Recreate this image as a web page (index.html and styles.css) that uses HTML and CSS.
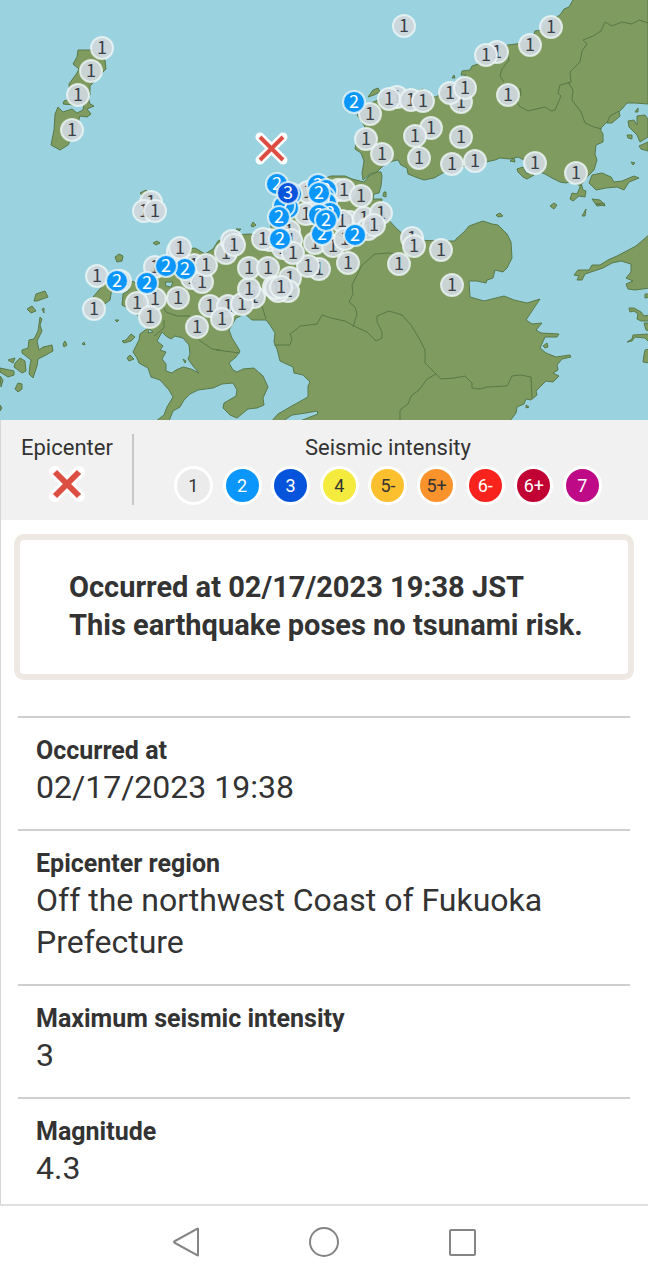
FILE: index.html
```html
<!DOCTYPE html>
<html lang="en">
<head>
<meta charset="utf-8">
<meta name="viewport" content="width=device-width, initial-scale=1">
<title>Earthquake information</title>
<link rel="stylesheet" href="styles.css">
</head>
<body>
<main class="page">
  <svg class="map" viewBox="0 0 648 420" role="img" aria-label="Seismic intensity map">
    <rect class="sea" width="648" height="420"/>
    <g class="land">
      <!-- Honshu -->
      <path d="M573 0L569 7L564 9L560 15L551 20L541 30L535 31L533 36L527 42L516 44L508 45L495 48L485 58L478 64L472 66L470 70L462 71L461 75L466 75L450 87L436 97L425 96L423 89L414 92L400 96L378 100L371 103L365 109L357 115L364 125L366 131L356 144L355 149L361 153L364 161L362 173L363 180L370 174L377 172L384 165L393 161L398 160L401 165L407 168L408 174L418 178L424 180L434 178L441 174L450 169L470 165L486 162L495 160L500 158L510 159L518 157L524 160L530 168L545 174L552 178L560 182L566 183L572 181L580 186L588 176L594 170L597 160L595 154L596 145L603 142L603 134L600 129L610 119L622 109L627 103L635 103L648 104V-3H573Z"/>
      <!-- Kyushu -->
      <path d="M381 172L382 176L381 186L379 193L374 194L373 199L382 199L381 206L385 216L397 229L403 234L415 240L440 241L455 241L456 239L464 232L469 226L483 221L492 224L498 225L507 234L511 242L512 258L507 268L503 272L495 270L493 278L487 280L486 283L477 281L469 281L470 297L484 301L504 296L514 300L527 303L540 299L532 311L526 320L532 324L542 323L536 330L541 333L559 334L557 337L545 337L540 348L546 353L556 357L570 355L571 357L562 359L557 365L558 370L553 373L559 376L553 382L546 381L536 391L537 395L531 400L526 399L524 404L517 407L516 413L510 421H300L318 414L317 411L306 413L292 415L280 423H270L278 414L290 407L308 397V386L310 382L303 375L294 373L293 367L280 361L277 349L274 342L275 333L270 325L266 320L252 320L245 314L236 318L229 330L232 338L240 351L236 357L229 363L233 370L237 372L243 369L254 368L263 376L268 387L263 398L264 405L257 408L248 409L237 418L230 415L223 408L224 403L236 396L237 390L233 383L222 384L213 388L198 390L190 394L184 400L180 407L173 411L169 421H156L164 415L167 407L173 397L169 390L160 380L151 377L148 368L139 363L137 358L133 352L139 340L140 334L148 328L141 318L130 309L122 305L123 294L129 290L128 280L140 284L150 270L160 262L180 250L195 248L205 254L213 249L218 241L232 235L250 234L264 236L272 232L270 222L274 206L280 190L300 188L318 181L331 176L345 176L352 179L364 182L369 176L377 172Z"/>
      <!-- Tsushima -->
      <path d="M78 50L92 50L105 60L106 69L100 75L90 86L90 95L83 101L70 95L69 84L77 73L79 69L73 64L77 57Z"/>
      <path d="M64 101L70 99L78 101L88 97L90 104L94 106L87 109L91 114L87 117L80 116L76 129L68 145L60 150L51 145L54 130L55 114L58 107L63 112L72 109L77 113L83 110L84 103L74 105L63 104Z"/>
      <!-- Islets -->
      <path d="M368 97L373 90L378 88L380 92L374 95ZM384 192L386 192V197L383 196ZM140 193L146 190L151 195L145 198ZM115 257L119 254L123 256L122 261L117 262ZM153 243L157 241L160 243L156 245ZM452 78L454 75L455 78Z"/>
      <path d="M105 283L112 288L110 300L102 306L95 302L93 297ZM34 301L36 294L45 291L48 297L37 301ZM27 309L32 306L36 311L31 313ZM42 309L44 308L44 313ZM40 317L42 319L40 325L42 331L37 341L39 350L43 347L52 345L53 351L46 355L38 359L37 366L33 378L29 374L30 365L31 360L22 353L22 350L28 348L29 340L34 339L38 331ZM15 363L20 358L25 361L26 371L22 373L14 367ZM0 368L14 371L14 375L8 377L0 372ZM15 389L18 383L22 384L22 389L18 392ZM8 360L15 358L13 363ZM0 376L3 380L1 387ZM0 405L2 408L0 411ZM63 344L65 341L67 345L64 347ZM82 344L84 342L85 345ZM115 320L119 320L117 322ZM122 341L126 340L131 334L135 337L131 341L124 343ZM127 358L130 355L134 359L129 361ZM251 226L253 222L256 225L253 227ZM236 229L241 229L239 231ZM496 215L500 213L503 216L498 217Z"/>
      <!-- Inland Sea -->
      <path d="M581 183L583 190L586 191L585 197L579 196L573 201L570 199L572 193L577 194L580 187ZM589 183L592 175L602 173L611 177L614 182L622 181L634 176L639 178L629 182L624 190L617 187L606 188L596 190ZM592 199L600 200L605 205L597 206ZM550 206L554 203L557 205L554 209ZM607 123L610 116L619 111L620 116L612 123ZM517 169L523 167L526 173L534 175L527 179L523 177L518 172ZM510 161L514 158L515 162ZM635 112L638 108L638 112ZM628 121L634 120L637 125L637 116L645 115L648 119V137L640 142L637 135L629 127ZM627 135L632 135L632 139L628 138ZM639 146L648 142V151L641 149ZM631 162L635 163L633 165ZM582 216L586 209L585 216ZM596 204L604 203L605 206Z"/>
      <!-- Shikoku -->
      <path d="M650 234L636 246L617 256L608 260L600 265L592 265L589 270L578 270L574 275L579 276L577 280L582 280L585 274L594 271L603 268L612 263L621 261L631 264L631 272L626 278L633 281L626 284L628 289L635 290L650 288ZM650 294L645 294L645 298L650 297ZM629 308L634 308L641 312L644 316L650 315V321L641 321L637 319L638 314L634 311L630 312ZM650 323L644 323L646 330L650 331ZM650 334L633 335L632 339L627 342L632 341L635 337L645 338L650 343ZM650 349L645 350L644 355L643 362L650 363ZM543 346L547 343L548 347L545 348ZM526 405L529 407L526 408Z"/>
    </g>
    <!-- Omura bay and inlets -->
    <path class="bay" d="M157 341L162 332L166 336L171 339L175 336L183 338L189 345L190 354L188 359L193 366L199 373L191 369L183 367L176 370L172 373L166 371L166 364L162 359L166 352L160 350L163 346ZM165 282L173 282L171 287L166 286ZM149 329L153 332L148 333Z"/>
    <path class="islet" d="M183 359L186 361L185 363Z"/>
    <g class="border">
      <path d="M648 23L639 20L632 24L622 22L612 26L605 22L601 31L593 36L583 40L587 44L582 51L580 62L570 72L571 82L560 85L558 93L561 96L555 110L551 111L545 107L528 111L519 106L516 97L521 95L520 88M506 48L509 60L502 69L500 76L504 82M568 82L573 90L572 100L581 112L585 123L594 127L602 129"/>
      <path d="M389 253L375 254L362 265L357 275L352 285L353 294L349 302L355 307L357 314L353 327M274 345H290L292 339L290 334L297 329L300 326L309 325L317 324L322 315L331 318L345 321L356 327L367 332L376 341L382 338L382 332L377 322L377 316L389 311L402 315L411 325L420 340L425 350L425 363L436 374L441 379L454 378L465 376L472 383L472 388L480 389L487 387L507 386L512 376L520 375L531 377L532 398M436 374L427 379L419 390L411 396L408 404L400 410V420M262 306L266 319M216 350L240 353M163 306L166 312L177 316L190 316M199 340L212 349L220 350M164 320L164 328L154 336M389 253L396 254"/>
    </g>
    <g id="stations"></g>
    <g class="epicenter"><path class="halo" d="M260 137L283 160M283 137L260 160"/><path class="cross" d="M260 137L283 160M283 137L260 160"/></g>
  </svg>

  <section class="legend">
    <div class="legend-epicenter">
      <span>Epicenter</span>
      <svg class="legend-cross" viewBox="0 0 40 40" aria-hidden="true"><path class="halo" d="M8 8L32 32M32 8L8 32"/><path class="cross" d="M8 8L32 32M32 8L8 32"/></svg>
    </div>
    <div class="legend-scale">
      <span>Seismic intensity</span>
      <ul class="levels">
        <li class="level l1">1</li>
        <li class="level l2">2</li>
        <li class="level l3">3</li>
        <li class="level l4">4</li>
        <li class="level l5m">5-</li>
        <li class="level l5p">5+</li>
        <li class="level l6m">6-</li>
        <li class="level l6p">6+</li>
        <li class="level l7">7</li>
      </ul>
    </div>
  </section>

  <section class="notice">
    <p>Occurred at 02/17/2023 19:38 JST</p>
    <p>This earthquake poses no tsunami risk.</p>
  </section>

  <dl class="details">
    <div class="row"><dt>Occurred at</dt><dd>02/17/2023 19:38</dd></div>
    <div class="row"><dt>Epicenter region</dt><dd>Off the northwest Coast of Fukuoka Prefecture</dd></div>
    <div class="row"><dt>Maximum seismic intensity</dt><dd>3</dd></div>
    <div class="row"><dt>Magnitude</dt><dd>4.3</dd></div>
  </dl>
</main>

<nav class="navbar">
  <button type="button" aria-label="Back"><svg viewBox="0 0 32 32"><path d="M28 3V29Q28 30 27 29L5 17Q3 16 5 15L27 3Q28 2 28 3Z"/></svg></button>
  <button type="button" aria-label="Home"><svg viewBox="0 0 32 32"><circle cx="16" cy="16" r="14"/></svg></button>
  <button type="button" aria-label="Recent apps"><svg viewBox="0 0 32 32"><rect x="4" y="4" width="25" height="25" rx="1"/></svg></button>
</nav>
<script src="stations.js"></script>
</body>
</html>
```
FILE: stations.js
```js
// Observation points: [x, y, intensity], later points are drawn on top.
const stations = [
  [102,48,1],[91,71,1],[78,95,1],[72,130,1],
  [151,202,1],[144,211,1],[155,211,1],
  [404,26,1],[551,27,1],[530,45,1],[497,52,1],[486,55,1],[508,95,1],
  [461,102,1],[450,93,1],[465,88,1],
  [397,97,1],[389,99,1],[411,100,1],[423,101,1],[370,114,1],[366,139,1],[382,154,1],
  [431,128,1],[415,136,1],[461,137,1],[419,158,1],[452,164,1],[475,161,1],[535,163,1],[576,173,1],
  [354,102,2],
  [97,276,1],[94,309,1],[120,281,1],[178,251,1],[180,248,1],[155,267,1],[194,265,1],[192,278,1],[202,282,1],[206,265,1],
  [155,299,1],[137,303,1],[150,317,1],[178,298,1],[197,327,1],[210,306,1],
  [117,281,2],[147,283,2],[185,269,2],[166,266,2],
  [226,253,1],[232,241,1],[234,245,1],[254,297,1],[228,306,1],[242,304,1],[222,319,1],[249,289,1],[249,268,1],[268,268,1],
  [290,278,1],[288,291,1],[278,291,1],[274,287,1],[276,288,1],[281,287,1],[319,269,1],[308,266,1],[348,263,1],
  [270,240,1],[263,239,1],[285,247,1],[289,231,1],[291,240,1],[283,248,1],[293,253,1],
  [308,192,1],[312,213,1],[306,214,1],[338,190,1],[344,190,1],[361,196,1],[350,222,1],[342,221,1],[364,218,1],[381,213,1],[368,229,1],[374,225,1],
  [315,243,1],[333,246,1],[345,239,1],[412,238,1],[414,246,1],[441,250,1],[399,264,1],[452,285,1],
  [277,184,2],[291,194,2],[288,208,2],[284,206,2],[279,217,2],[280,239,2],[288,193,3],
  [318,185,2],[326,190,2],[324,197,2],[326,203,2],[319,193,2],
  [330,213,2],[319,215,2],[322,234,2],[326,220,2],[355,235,2]
];

const ns = "http://www.w3.org/2000/svg";
const layer = document.getElementById("stations");

for (const [x, y, level] of stations) {
  const group = document.createElementNS(ns, "g");
  group.setAttribute("class", "station s" + level);
  const dot = document.createElementNS(ns, "circle");
  dot.setAttribute("cx", x);
  dot.setAttribute("cy", y);
  dot.setAttribute("r", 11);
  const label = document.createElementNS(ns, "text");
  label.setAttribute("x", x);
  label.setAttribute("y", y + 6);
  label.textContent = level;
  group.append(dot, label);
  layer.append(group);
}
```
FILE: styles.css
```css
* { box-sizing: border-box; }

body {
  margin: 0;
  min-height: 100vh;
  display: flex;
  flex-direction: column;
  background: #fff;
  color: #333;
  font-family: Roboto, "Liberation Sans", sans-serif;
}

.page { flex: 1; box-shadow: inset 1px 0 #d6d6d6; }

.map { display: block; width: 100%; height: auto; }
.sea { fill: #9ad3df; }
.land { fill: #7f9b5f; stroke: #58794a; stroke-width: 1; stroke-linejoin: round; }
.bay { fill: #9ad3df; stroke: #58794a; }
.islet { fill: #7f9b5f; stroke: #58794a; }
.border { fill: none; stroke: #587846; stroke-width: 1; stroke-linejoin: round; }

.station circle { stroke: #eef6f6; stroke-opacity: 0.8; stroke-width: 2; }
.station text {
  font-family: "Noto Sans CJK JP", "Noto Sans", sans-serif;
  font-size: 18px;
  text-anchor: middle;
  fill: #3b4048;
}
.s1 circle { fill: #cfd7dd; fill-opacity: 0.93; }
.s2 circle { fill: #0a96fb; }
.s3 circle { fill: #0654dc; }
.s2 text, .s3 text { fill: #fff; }

.halo, .cross { fill: none; }
.epicenter .halo { stroke: #fff; stroke-width: 9; stroke-linecap: round; }
.epicenter .cross { stroke: #dc4e42; stroke-width: 4; }

.legend {
  display: flex;
  padding: 14px 0 15px;
  background: #f1f1f1;
  box-shadow: inset 1px 0 #d6d6d6;
  font-size: 22px;
  line-height: 28px;
}
.legend-epicenter {
  display: flex;
  flex-direction: column;
  align-items: center;
  padding: 0 19px 0 21px;
  border-right: 2px solid #c8c8c8;
}
.legend-cross { width: 40px; height: 40px; margin-top: 2px; }
.legend-cross .halo { stroke: #fff; stroke-width: 12; stroke-linecap: round; }
.legend-cross .cross { stroke: #dc4e42; stroke-width: 6; }
.legend-scale {
  flex: 1;
  display: flex;
  flex-direction: column;
  align-items: center;
  padding-right: 6px;
}
.levels {
  display: flex;
  justify-content: space-between;
  width: 428px;
  max-width: 100%;
  margin: 4px 0 0;
  padding: 0;
  list-style: none;
}
.level {
  width: 39px;
  height: 39px;
  border: 3px solid #fff;
  border-radius: 50%;
  font-size: 18px;
  line-height: 33px;
  text-align: center;
}
.l1 { background: #ebebeb; }
.l2 { background: #0a96fb; color: #fff; }
.l3 { background: #0654dc; color: #fff; }
.l4 { background: #f5ea3e; }
.l5m { background: #fcc02e; }
.l5p { background: #fb932c; }
.l6m { background: #f8231c; color: #fff; }
.l6p { background: #c10034; color: #fff; }
.l7 { background: #bf0a88; color: #fff; }

.notice {
  margin: 14px 14px 36px;
  padding: 28px 24px 30px 49px;
  border: 6px solid #eee8e2;
  border-radius: 10px;
  font-size: 29px;
  font-weight: 700;
  line-height: 38px;
}
.notice p { margin: 0; }

.details { margin: 0 18px; }
.row { padding: 18px 18px 21px; border-top: 2px solid #cfcfcf; }
.row:last-child { padding-bottom: 15px; }
dt { font-size: 25px; font-weight: 700; line-height: 30px; }
dd { margin: 0; font-size: 32px; line-height: 42px; }

.navbar {
  display: flex;
  justify-content: center;
  gap: 106px;
  padding: 20px 0 22px;
  border-top: 2px solid #e0e0e0;
}
.navbar button {
  display: block;
  width: 32px;
  height: 32px;
  padding: 0;
  border: 0;
  background: none;
}
.navbar svg {
  display: block;
  width: 32px;
  height: 32px;
  fill: none;
  stroke: #858585;
  stroke-width: 2;
}
```
